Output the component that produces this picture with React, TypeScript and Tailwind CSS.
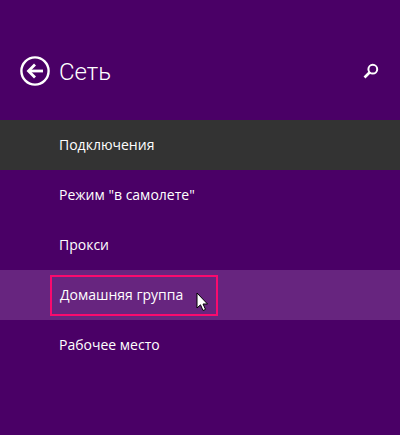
import React from "react";

const font = "font-['Open_Sans','Noto_Sans',sans-serif]";

const Row = ({ label, className = "" }: { label: string; className?: string }) => (
	<div className={`flex h-[50px] items-center pb-[2px] pl-[59px] text-[14px] text-white ${className}`}>
		<span>{label}</span>
	</div>
);

export default function App() {
	return (
		<div className={`h-[435px] w-[400px] overflow-hidden bg-[#4a0066] ${font}`}>
			{/* Header */}
			<div className="flex h-[120px] items-start justify-between pl-[20px] pr-[21px] pt-[55px]">
				<div className="flex items-center gap-[9px]">
					<svg width="30" height="30" viewBox="0 0 30 30" fill="none">
						<circle cx="15" cy="15" r="13.6" stroke="white" strokeWidth="2.4" />
						<path d="M9 15H23" stroke="white" strokeWidth="2.8" />
						<path d="M15 8.5L8.5 15L15 21.5" stroke="white" strokeWidth="2.8" fill="none" />
					</svg>
					<span className="pt-[2px] font-['Roboto',sans-serif] text-[24px] leading-[30px] font-light text-white">Сеть</span>
				</div>
				<svg className="mt-[8px]" width="16" height="16" viewBox="0 0 16 16" fill="none">
					<circle cx="9.8" cy="6.2" r="4.4" stroke="white" strokeWidth="2" />
					<path d="M6.5 9.5L1.5 14.5" stroke="white" strokeWidth="2.6" />
				</svg>
			</div>

			{/* Menu */}
			<Row label="Подключения" className="bg-[#333333]" />
			<Row label={'Режим "в самолете"'} />
			<Row label="Прокси" />
			<div className="relative">
				<Row label="Домашняя группа" className="bg-[#67257f] pl-[60px]" />
				<div className="absolute left-[50px] top-[5px] h-[41px] w-[168px] border-2 border-[#fa0a6e]" />
				<svg className="absolute left-[196px] top-[22px]" width="13" height="20" viewBox="0 0 13 20">
					<path d="M1 1V16L4.5 12.8L7 18.5L9.5 17.4L7 12H11.5Z" fill="white" stroke="black" strokeWidth="1" />
				</svg>
			</div>
			<Row label="Рабочее место" />
		</div>
	);
}
